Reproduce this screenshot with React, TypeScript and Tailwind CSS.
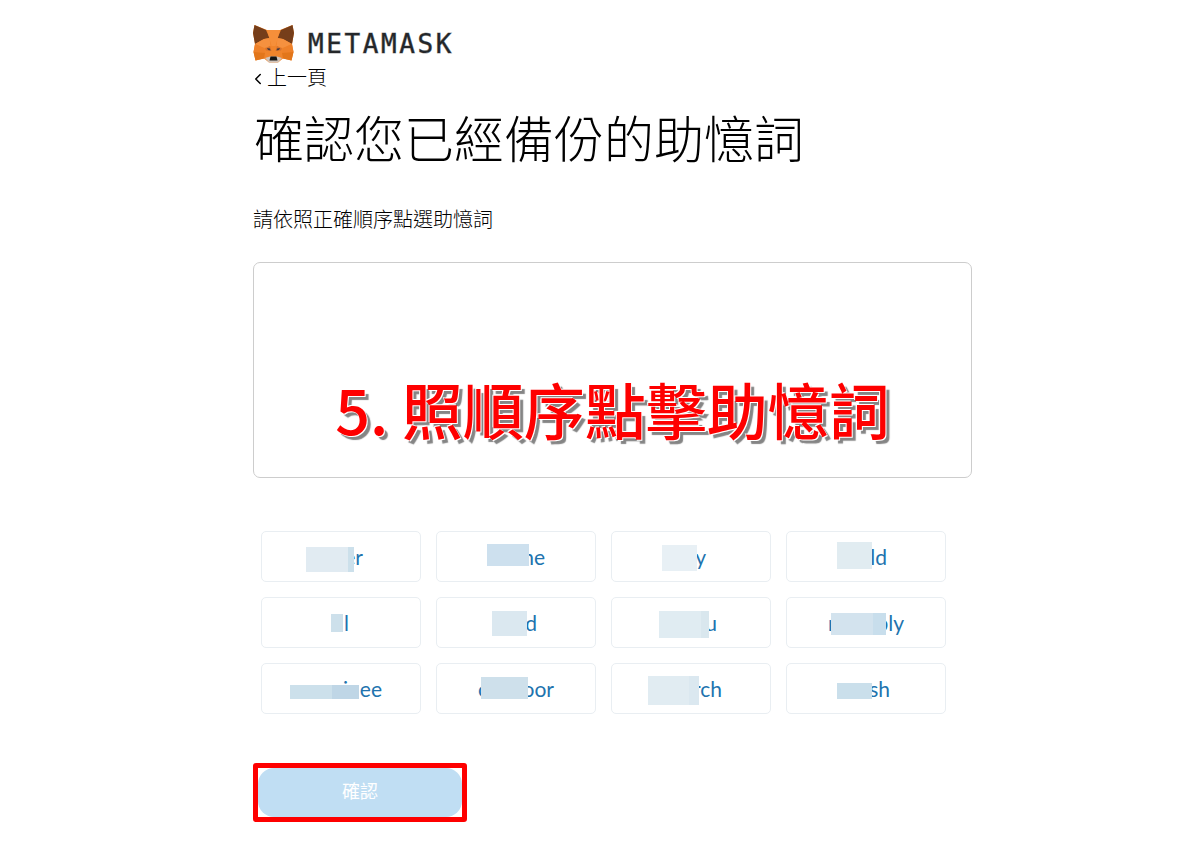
import clsx from "clsx";
import { ChevronLeft } from "lucide-react";

type Word = {
  start?: string;
  end: string;
  pad: string;
  mask: string;
  shade?: string;
};

const WORDS: Word[] = [
  { end: "er", pad: "px-[57px]", mask: "left-[44px] top-[15px] w-[48px] h-[25px] bg-[#e1ebf2]", shade: "w-[6px] bg-[#cce0eb]" },
  { start: "l", end: "ne", pad: "px-[50px]", mask: "left-[50px] top-[12px] w-[42px] h-[22px] bg-[#cde0ee]" },
  { end: "y", pad: "px-[64px]", mask: "left-[50px] top-[13px] w-[35px] h-[26px] bg-[#e8f0f5]" },
  { end: "ld", pad: "px-[58px]", mask: "left-[50px] top-[10px] w-[35px] h-[27px] bg-[#e1ecf1]" },
  { end: "l", pad: "px-[71px]", mask: "left-[69px] top-[16px] w-[12px] h-[18px] bg-[#cde0eb]" },
  { end: "d", pad: "px-[58px]", mask: "left-[55px] top-[13px] w-[35px] h-[25px] bg-[#dbe8f0]" },
  { end: "u", pad: "px-[53px]", mask: "left-[47px] top-[13px] w-[50px] h-[27px] bg-[#e0ecf2]", shade: "w-[8px] bg-[#d9e7ee]" },
  { start: "r", end: "bly", pad: "px-[41px]", mask: "left-[44px] top-[15px] w-[55px] h-[22px] bg-[#d3e3ee]", shade: "w-[13px] bg-[#c8deec]" },
  { end: "inee", pad: "px-[38px]", mask: "left-[28px] top-[21px] w-[69px] h-[14px] bg-[#cce0eb]", shade: "w-[27px] bg-[#bfd6e6]" },
  { start: "o", end: "oor", pad: "px-[41px]", mask: "left-[44px] top-[13px] w-[47px] h-[22px] bg-[#cee0eb]" },
  { end: "rch", pad: "px-[48px]", mask: "left-[36px] top-[12px] w-[51px] h-[29px] bg-[#e1ecf2]", shade: "w-[10px] bg-[#dbe8f0]" },
  { end: "sh", pad: "px-[55px]", mask: "left-[50px] top-[19px] w-[35px] h-[16px] bg-[#cadfeb]" },
];

function Fox() {
  return (
    <svg viewBox="0 0 41 38" className="h-[38px] w-[41px]" aria-hidden="true">
      <path d="M1.5 0 L14 5 H27 L39.5 0 L41 8 L39 19 L40.5 27 L38.5 35.5 L30 33.5 L25 37.5 H16 L11 33.5 L2.5 35.5 L0.5 27 L2 19 L0 8 Z" fill="#f0842b" />
      <path d="M1.5 0 L13 5 L16.5 13 L11 14 L2 19 L0 8 Z" fill="#763e1a" />
      <path d="M39.5 0 L28 5 L24.5 13 L30 14 L39 19 L41 8 Z" fill="#763e1a" />
      <path d="M14 5 L18.5 21 H22.5 L27 5 Z" fill="#f58f3a" />
      <path d="M2 19 L11 14 L16.5 13 L17.5 21 L11 23 Z" fill="#f5913f" />
      <path d="M39 19 L30 14 L24.5 13 L23.5 21 L30 23 Z" fill="#f5913f" />
      <path d="M2 19 L11 23 L12 28 L0.5 27 Z" fill="#ee812a" />
      <path d="M39 19 L30 23 L29 28 L40.5 27 Z" fill="#ee812a" />
      <path d="M0.5 27 L12 28 L11 33.5 L2.5 35.5 Z" fill="#e2761b" />
      <path d="M40.5 27 L29 28 L30 33.5 L38.5 35.5 Z" fill="#e2761b" />
      <path d="M12 23.5 L17 21 L18.5 26 L13 25.5 Z" fill="#d5732f" />
      <path d="M29 23.5 L24 21 L22.5 26 L28 25.5 Z" fill="#d5732f" />
      <path d="M14 23 L17 23.5 L17.5 25.5 L15 25 Z" fill="#4a3a3c" />
      <path d="M27 23 L24 23.5 L23.5 25.5 L26 25 Z" fill="#4a3a3c" />
      <path d="M12 33 L17 31.5 H24 L29 33 L25 37.5 H16 Z" fill="#d0c4bb" />
      <path d="M17.5 31.5 H23.5 L24.5 35.5 H16.5 Z" fill="#161616" />
    </svg>
  );
}

function WordButton({ word }: { word: Word }) {
  return (
    <button
      type="button"
      className="relative h-[51px] w-[160px] rounded-[5px] border border-[#e9eef2] bg-white font-['Lato',sans-serif] text-[21px] leading-7 text-[#2173ae]"
    >
      <span className={clsx("flex justify-between", word.pad)}>
        <span>{word.start}</span>
        <span>{word.end}</span>
      </span>
      <span className={clsx("absolute flex justify-end", word.mask)}>
        {word.shade && <span className={clsx("h-full", word.shade)} />}
      </span>
    </button>
  );
}

export default function App() {
  return (
    <main className="mx-auto max-w-[740px] bg-white pt-6 pb-6 pl-[21px] font-['Noto_Sans_CJK_TC',sans-serif] text-black">
      <header className="flex h-10 items-center gap-3.5">
        <Fox />
        <span className="font-['DejaVu_Sans_Mono',monospace] text-[26px] leading-8 tracking-widest text-[#24272a] [-webkit-text-stroke:1px_#24272a70]">
          METAMASK
        </span>
      </header>

      <a href="#back" className="flex w-fit items-center text-[20px] leading-[26px] font-light">
        <ChevronLeft size={18} strokeWidth={2} className="-mx-1 mt-1" />
        <span className="pl-1">上一頁</span>
      </a>

      <h1 className="mt-4 pl-px text-[50px] leading-[60px] font-light">確認您已經備份的助憶詞</h1>
      <p className="mt-[39px] text-[20px] leading-7 font-light">請依照正確順序點選助憶詞</p>

      <section className="mt-[29px] flex h-[216px] items-end justify-center rounded-[7px] border border-[#cdcdcd] pb-[30px]">
        <p className="text-[61px] leading-[76px] font-medium whitespace-nowrap text-[#fe0000] [text-shadow:1px_1px_0_#fff,-1px_-1px_0_#fff,4px_4px_1px_#858585]">
          5. 照順序點擊助憶詞
        </p>
      </section>

      <section className="mt-[53px] flex flex-wrap gap-[15px] pl-2">
        {WORDS.map((word, i) => (
          <WordButton key={i} word={word} />
        ))}
      </section>

      <div className="mt-[49px] h-[59px] w-[214px] overflow-hidden rounded-[3px] border-[5px] border-[#fe0000]">
        <button type="button" disabled className="block h-full w-full rounded-[16px] bg-[#c0def3] pb-1 text-[18px] text-white">
          確認
        </button>
      </div>
    </main>
  );
}
